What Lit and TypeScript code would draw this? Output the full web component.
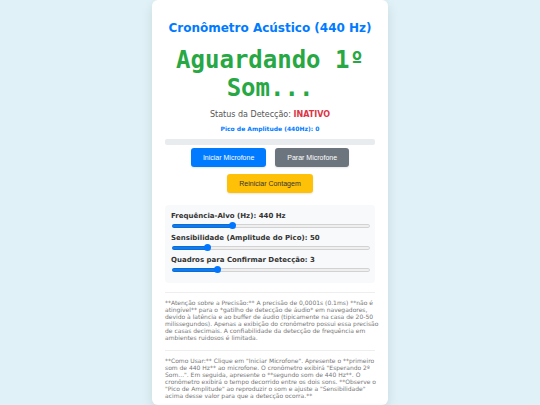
import { LitElement, html, css } from 'lit';
import { customElement, property, state } from 'lit/decorators.js';

@customElement('range-field')
export class RangeField extends LitElement {
  @property({ type: String }) label = '';
  @property({ type: String }) unit = '';
  @property({ type: Number }) min = 0;
  @property({ type: Number }) max = 100;
  @property({ type: Number }) value = 0;

  static styles = css`
    :host {
      display: block;
    }

    .label {
      display: block;
      font-size: 7px;
      font-weight: bold;
      line-height: 10px;
      color: #333;
    }

    .slider {
      appearance: none;
      display: block;
      width: 100%;
      height: 8px;
      margin: 1px 0 3px 1px;
      background: transparent;
    }

    .slider::-webkit-slider-runnable-track {
      height: 4px;
      border-radius: 2px;
      background: linear-gradient(#0f7bf0, #0f7bf0) 0 0 / var(--fill) 100% no-repeat #efefef;
      box-shadow: inset 0 0 0 1px rgba(0, 0, 0, 0.12);
    }

    .slider::-webkit-slider-thumb {
      appearance: none;
      width: 7px;
      height: 7px;
      margin-top: -2px;
      border-radius: 50%;
      background: #0075ff;
    }
  `;

  render() {
    const fill = ((this.value - this.min) / (this.max - this.min)) * 100;
    return html`
      <label for="slider" class="label">${this.label}: ${this.value}${this.unit}</label>
      <input
        id="slider"
        class="slider"
        type="range"
        min=${this.min}
        max=${this.max}
        .value=${String(this.value)}
        style=${`--fill: ${fill}%`}
        @input=${this.onInput}
      />
    `;
  }

  onInput(e: InputEvent) {
    this.value = Number((e.target as HTMLInputElement).value);
  }
}

@customElement('app-root')
export class AppRoot extends LitElement {
  @state() active = false;
  @state() peak = 0;

  static styles = css`
    :host {
      display: flex;
      justify-content: center;
      min-height: 100vh;
      background: #e0f2f7;
      font-family: Verdana, 'DejaVu Sans', sans-serif;
      color: #333;
    }

    .card {
      box-sizing: border-box;
      width: 100%;
      max-width: 236px;
      padding: 20px 13px 6px;
      border-radius: 6px;
      background: #fff;
      box-shadow: 0 4px 12px rgba(0, 0, 0, 0.1);
      text-align: center;
    }

    .title {
      margin: 0;
      font-size: 12px;
      line-height: 16px;
      color: #007bff;
    }

    .timer {
      margin: 10px 0 7px;
      font-family: 'DejaVu Sans Mono', monospace;
      font-size: 24px;
      font-weight: bold;
      line-height: 28px;
      color: #28a745;
    }

    .status {
      font-size: 8px;
      line-height: 12px;
      color: #555;
    }

    .state {
      color: #dc3545;
    }

    .state.on {
      color: #28a745;
    }

    .peak {
      margin-top: 3px;
      font-size: 6px;
      font-weight: bold;
      line-height: 10px;
      color: #007bff;
    }

    .meter {
      height: 6px;
      margin-top: 5px;
      border-radius: 2px;
      background: #e9ecef;
      overflow: hidden;
    }

    .level {
      height: 100%;
      background: #28a745;
    }

    .buttons {
      display: flex;
      flex-wrap: wrap;
      justify-content: center;
      gap: 7px 9px;
      margin: 3px 0 12px;
    }

    .button {
      padding: 0 12px;
      border: none;
      border-radius: 3px;
      font-family: 'Liberation Sans', Arial, sans-serif;
      font-size: 7px;
      line-height: 19px;
      color: #fff;
      box-shadow: 0 1px 2px rgba(0, 0, 0, 0.1);
      cursor: pointer;
    }

    .start {
      background: #007bff;
    }

    .stop {
      background: #6c757d;
    }

    .reset {
      background: #ffc107;
      color: #333;
    }

    .settings {
      padding: 6px;
      border-radius: 4px;
      background: #f8f9fa;
      text-align: left;
    }

    .note {
      margin-top: 9px;
      padding-top: 6px;
      border-top: 1px solid #eee;
      font-size: 6px;
      line-height: 7px;
      color: #777;
      text-align: left;
    }

    .note p {
      margin: 0 -6px 0 0;
    }
  `;

  render() {
    return html`
      <main class="card">
        <h1 class="title">Cronômetro Acústico (440 Hz)</h1>
        <div class="timer">Aguardando 1º Som...</div>
        <div class="status">
          Status da Detecção:
          <b class=${`state ${this.active ? 'on' : ''}`}>${this.active ? 'ATIVO' : 'INATIVO'}</b>
        </div>
        <div class="peak">Pico de Amplitude (440Hz): ${this.peak}</div>
        <div class="meter"><div class="level" style=${`width: ${this.peak}%`}></div></div>

        <div class="buttons">
          <button class="button start" @click=${() => { this.active = true; }}>Iniciar Microfone</button>
          <button class="button stop" @click=${() => { this.active = false; }}>Parar Microfone</button>
          <button class="button reset" @click=${() => { this.peak = 0; }}>Reiniciar Contagem</button>
        </div>

        <section class="settings">
          <range-field label="Frequência-Alvo (Hz)" unit=" Hz" min="200" max="1000" value="440"></range-field>
          <range-field label="Sensibilidade (Amplitude do Pico)" min="10" max="250" value="50"></range-field>
          <range-field label="Quadros para Confirmar Detecção" min="1" max="10" value="3"></range-field>
        </section>

        <div class="note">
          <p>
            **Atenção sobre a Precisão:** A precisão de 0,0001s (0.1ms) **não é atingível** para o
            *gatilho de detecção de áudio* em navegadores, devido à latência e ao buffer de áudio
            (tipicamente na casa de 20-50 milissegundos). Apenas a exibição do cronômetro possui
            essa precisão de casas decimais. A confiabilidade da detecção de frequência em
            ambientes ruidosos é limitada.
          </p>
        </div>
        <div class="note">
          <p>
            **Como Usar:** Clique em "Iniciar Microfone". Apresente o **primeiro som de 440 Hz** ao
            microfone. O cronômetro exibirá "Esperando 2º Som...". Em seguida, apresente o
            **segundo som de 440 Hz**. O cronômetro exibirá o tempo decorrido entre os dois sons.
            **Observe o "Pico de Amplitude" ao reproduzir o som e ajuste a "Sensibilidade" acima
            desse valor para que a detecção ocorra.**
          </p>
        </div>
      </main>
    `;
  }
}

declare global {
  interface HTMLElementTagNameMap {
    'range-field': RangeField;
    'app-root': AppRoot;
  }
}
